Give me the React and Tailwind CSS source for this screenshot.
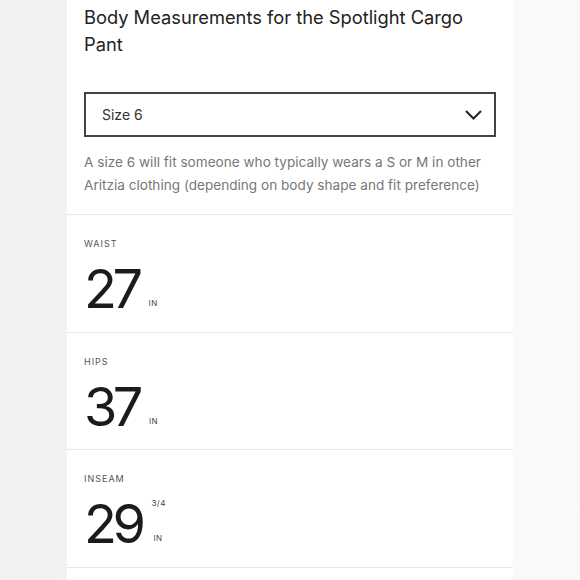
import React from 'react';

const rows = [
    { label: 'WAIST', value: '27' },
    { label: 'HIPS', value: '37' },
    { label: 'INSEAM', value: '29', fraction: '3/4' },
];

function Chevron() {
    return (
        <svg width="17" height="10" viewBox="0 0 17 10" fill="none">
            <path d="M1 1l7.5 7.5L16 1" stroke="#222" strokeWidth="2" />
        </svg>
    );
}

export default function App() {
    return (
        <div
            className="w-[580px] h-[580px] overflow-hidden bg-gradient-to-r from-[#f1f1f1] via-[#f6f6f6] to-[#fafafa]"
            style={{ fontFamily: 'Inter, "Liberation Sans", sans-serif' }}
        >
            <div className="ml-[67px] w-[446px] min-h-[580px] bg-white">
                {/* header */}
                <div className="px-[17px] pt-[4px] pb-[17px]">
                    <h1 className="text-[18.3px] leading-[27px] text-[#222] font-normal">
                        Body Measurements for the Spotlight Cargo
                        <br />
                        Pant
                    </h1>
                    <div className="mt-[34px] h-[45px] border-2 border-[#444] flex items-center justify-between pl-[16px] pr-[12px]">
                        <span className="text-[14px] text-[#333]">Size 6</span>
                        <Chevron />
                    </div>
                    <p className="mt-[14px] text-[13.6px] leading-[23px] text-[#777]">
                        A size 6 will fit someone who typically wears a S or M in other
                        <br />
                        Aritzia clothing (depending on body shape and fit preference)
                    </p>
                </div>

                {/* measurements */}
                {rows.map((r) => (
                    <div key={r.label} className="h-[117.5px] border-t border-[#e6e6e6] px-[17px] pt-[23px]">
                        <div className="text-[9px] leading-[12px] tracking-[1px] text-[#555]">{r.label}</div>
                        <div className="mt-[12px] flex">
                            <span className="text-[54px] leading-none text-[#1b1b1b] tracking-[-4.5px]">{r.value}</span>
                            <div className="ml-[10px] flex flex-col justify-between pt-[1px] pb-[8px] text-[8px] leading-[10px] tracking-[0.5px] text-[#444]">
                                <span>{r.fraction || ''}</span>
                                <span className={r.fraction ? 'ml-[2px]' : ''}>IN</span>
                            </div>
                        </div>
                    </div>
                ))}
                <div className="border-t border-[#e6e6e6]" />
            </div>
        </div>
    );
}
